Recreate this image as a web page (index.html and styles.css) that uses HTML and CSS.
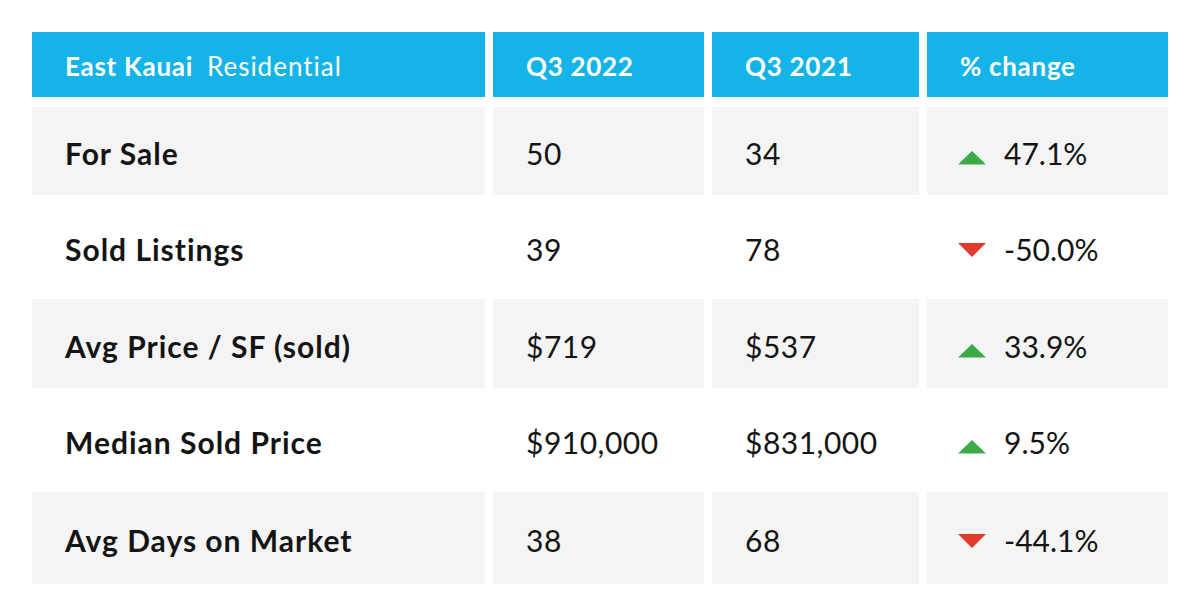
FILE: index.html
```html
<!DOCTYPE html>
<html>
<head>
<meta charset="utf-8">
<link rel="stylesheet" href="styles.css">
</head>
<body>
<div class="table">
  <div class="cell head"><b>East Kauai</b><span class="sub">Residential</span></div>
  <div class="cell head"><b>Q3 2022</b></div>
  <div class="cell head"><b>Q3 2021</b></div>
  <div class="cell head"><b>% change</b></div>

  <div class="cell gray label">For Sale</div>
  <div class="cell gray">50</div>
  <div class="cell gray">34</div>
  <div class="cell gray change"><svg class="tri" viewBox="0 0 28 14"><polygon points="0,13.5 14,0 28,13.5" fill="#3bab48"/></svg><span>47.1%</span></div>

  <div class="cell label">Sold Listings</div>
  <div class="cell">39</div>
  <div class="cell">78</div>
  <div class="cell change"><svg class="tri down" viewBox="0 0 28 14"><polygon points="0,0 28,0 14,14" fill="#e23b2e"/></svg><span>-50.0%</span></div>

  <div class="cell gray label">Avg Price / SF (sold)</div>
  <div class="cell gray">$719</div>
  <div class="cell gray">$537</div>
  <div class="cell gray change"><svg class="tri" viewBox="0 0 28 14"><polygon points="0,13.5 14,0 28,13.5" fill="#3bab48"/></svg><span>33.9%</span></div>

  <div class="cell label">Median Sold Price</div>
  <div class="cell">$910,000</div>
  <div class="cell">$831,000</div>
  <div class="cell change"><svg class="tri" viewBox="0 0 28 14"><polygon points="0,13.5 14,0 28,13.5" fill="#3bab48"/></svg><span>9.5%</span></div>

  <div class="cell gray label">Avg Days on Market</div>
  <div class="cell gray">38</div>
  <div class="cell gray">68</div>
  <div class="cell gray change"><svg class="tri down" viewBox="0 0 28 14"><polygon points="0,0 28,0 14,14" fill="#e23b2e"/></svg><span>-44.1%</span></div>
</div>
</body>
</html>
```
FILE: styles.css
```css
html, body {
  margin: 0;
  padding: 0;
  background: #ffffff;
}
body {
  font-family: Lato, "Open Sans", sans-serif;
  color: #141414;
}
.table {
  display: grid;
  grid-template-columns: 453px 211px 207px 241px;
  grid-template-rows: 67px 88px 88px 89px 88px 92px;
  column-gap: 8px;
  row-gap: 8px;
  padding: 32px 0 0 32px;
}
.cell {
  display: flex;
  align-items: center;
  padding-left: 33px;
  font-size: 30px;
  font-weight: 400;
  letter-spacing: 0.5px;
  padding-top: 4px;
  box-sizing: border-box;
}
.head {
  background: #14b4e8;
  color: #ffffff;
  font-size: 26px;
  letter-spacing: 0.7px;
  padding-top: 2px;
  margin-bottom: 2px;
}
.head b {
  font-weight: 700;
}
.head .sub {
  font-weight: 400;
  margin-left: 14px;
  letter-spacing: 1px;
}
.gray {
  background: #f4f4f4;
}
.label {
  font-weight: 700;
  letter-spacing: 1px;
}
.change {
  padding-left: 31px;
  gap: 18px;
  letter-spacing: 0;
}
.tri {
  width: 28px;
  height: 14px;
  margin-top: 10px;
}
.tri.down {
  margin-top: 2px;
}
```
